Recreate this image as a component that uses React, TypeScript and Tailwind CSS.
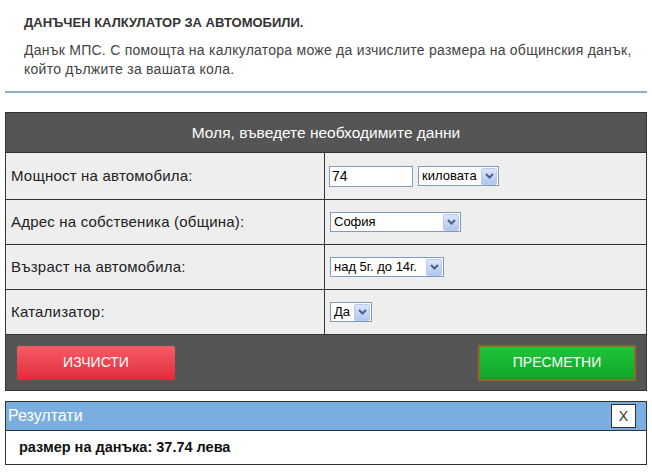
import React from 'react'

function Chevron() {
  return (
    <span className="flex h-[17px] w-[16px] shrink-0 items-center justify-center rounded-[2px] border border-[#b9c9ef] bg-gradient-to-b from-[#dbe5fb] to-[#b3c6f0]">
      <svg width="9" height="6" viewBox="0 0 9 6">
        <path d="M1 1 L4.5 4.5 L8 1" fill="none" stroke="#4d6185" strokeWidth="2" />
      </svg>
    </span>
  )
}

function FakeSelect({ value, width }: { value: string; width: string }) {
  return (
    <div
      className={`flex h-[20px] items-center justify-between border border-[#7f9db9] bg-white pl-[3px] pr-[1px] text-[13px] text-black ${width}`}
    >
      <span>{value}</span>
      <Chevron />
    </div>
  )
}

function Row({
  label,
  height = 'h-[45px]',
  children,
}: {
  label: string
  height?: string
  children: React.ReactNode
}) {
  return (
    <div className={`flex border-b border-[#333] ${height}`}>
      <div className="flex w-[319px] items-center border-r border-[#333] pl-[5px] text-[15px] tracking-[0.2px] text-[#222]">
        {label}
      </div>
      <div className="flex flex-1 items-center gap-[5px] pl-[4px]">{children}</div>
    </div>
  )
}

export default function App() {
  return (
    <div className="h-[472px] w-[652px] bg-white font-['Liberation_Sans',Arial,sans-serif]">
      <div className="pl-[24px] pr-[10px] pt-[15px]">
        <h1 className="text-[13px] font-bold leading-[16px] text-[#333]">
          ДАНЪЧЕН КАЛКУЛАТОР ЗА АВТОМОБИЛИ.
        </h1>
        <p className="mt-[10px] text-[14px] leading-[19px] tracking-[0.25px] text-[#444]">
          Данък МПС. С помощта на калкулатора може да изчислите размера на общинския данък,
          който дължите за вашата кола.
        </p>
      </div>
      <div className="mx-[5px] mt-[12px] h-[2px] bg-[#8fb0c8]" />

      <div className="mx-[5px] mt-[19px] border border-[#333]">
        <div className="flex h-[40px] items-center justify-center border-b border-[#333] bg-[#555] text-[15.5px] text-white">
          Моля, въведете необходимите данни
        </div>
        <div className="bg-[#eeeeee]">
          <Row label="Мощност на автомобила:" height="h-[47px]">
            <div className="flex h-[21px] w-[84px] items-center border border-[#7f9db9] bg-white pl-[2px] text-[14px] text-black">
              74
            </div>
            <FakeSelect value="киловата" width="w-[81px]" />
          </Row>
          <Row label="Адрес на собственика (община):">
            <div className="pl-[1px]">
              <FakeSelect value="София" width="w-[131px]" />
            </div>
          </Row>
          <Row label="Възраст на автомобила:">
            <div className="pl-[1px]">
              <FakeSelect value="над 5г. до 14г." width="w-[114px]" />
            </div>
          </Row>
          <Row label="Катализатор:">
            <div className="pl-[1px]">
              <FakeSelect value="Да" width="w-[42px]" />
            </div>
          </Row>
        </div>
        <div className="flex h-[55px] items-center justify-between bg-[#555] pl-[11px] pr-[10px]">
          <button className="flex h-[34px] w-[158px] items-center justify-center rounded-[2px] bg-gradient-to-b from-[#f75a66] to-[#e02a3c] text-[14px] text-white">
            ИЗЧИСТИ
          </button>
          <button className="flex h-[36px] w-[158px] items-center justify-center border-2 border-[#8b6a2c] bg-gradient-to-b from-[#1fc53a] to-[#0ea628] text-[14px] text-white">
            ПРЕСМЕТНИ
          </button>
        </div>
      </div>

      <div className="mx-[5px] mt-[10px] border border-[#333]">
        <div className="flex h-[29px] items-center justify-between border-b border-[#333] bg-[#7aaee0] pl-[2px] pr-[10px]">
          <span className="text-[16px] text-white">Резултати</span>
          <span className="flex h-[24px] w-[25px] items-center justify-center border border-[#333] bg-white text-[14px] text-[#333]">
            X
          </span>
        </div>
        <div className="flex h-[33px] items-center bg-white pl-[13px] text-[14.5px] font-bold text-[#111]">
          размер на данъка: 37.74 лева
        </div>
      </div>
    </div>
  )
}
